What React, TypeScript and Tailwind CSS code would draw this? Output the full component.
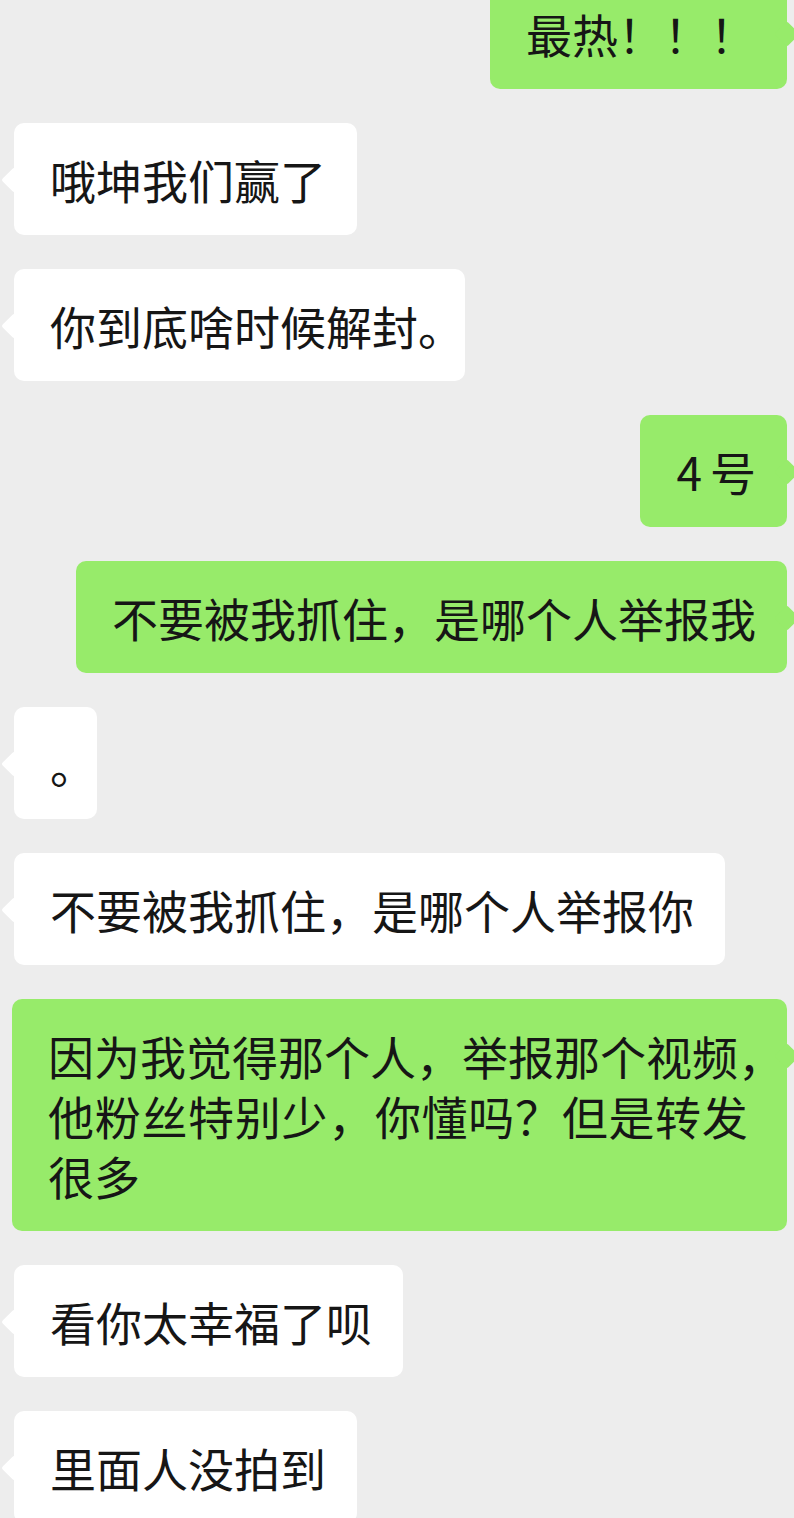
import React from "react";

type Msg = { side: "l" | "r"; lines: React.ReactNode[]; w?: string };

const Dot = () => <span className="inline-block w-[16px] overflow-visible whitespace-nowrap">。</span>;

const msgs: Msg[] = [
  { side: "r", lines: ["最热！！！"] },
  { side: "l", lines: ["哦坤我们赢了"] },
  { side: "l", lines: [<>你到底啥时候解封<Dot /></>] },
  { side: "r", lines: [<><span className="mr-[8px]">4</span>号</>] },
  { side: "r", lines: ["不要被我抓住，是哪个人举报我"] },
  { side: "l", lines: [<Dot />] },
  { side: "l", lines: ["不要被我抓住，是哪个人举报你"] },
  {
    side: "r",
    lines: [
      "因为我觉得那个人，举报那个视频，",
      <span className="tracking-[0.7px]">他粉丝特别少，你懂吗？但是转发</span>,
      "很多",
    ],
    w: "w-[775px]",
  },
  { side: "l", lines: ["看你太幸福了呗"] },
  { side: "l", lines: ["里面人没拍到"] },
];

function Bubble({ m }: { m: Msg }) {
  const green = m.side === "r";
  return (
    <div className={green ? "flex justify-end pr-[7px]" : "flex justify-start pl-[14px]"}>
      <div
        className={
          "relative rounded-[10px] pl-[36px] pr-[31px] py-[26px] text-[46px] leading-[60px] text-[#161616] whitespace-nowrap " +
          (green ? "bg-[#97eb6a] " : "bg-white ") +
          (m.w ?? "")
        }
      >
        <div
          className={
            "absolute top-[48px] w-[18px] h-[18px] rotate-45 rounded-[2px] " +
            (green ? "right-[-9px] bg-[#97eb6a]" : "left-[-9px] bg-white")
          }
        />
        <div className="relative">
          {m.lines.map((l, i) => (
            <div key={i}>{l}</div>
          ))}
        </div>
      </div>
    </div>
  );
}

export default function App() {
  return (
    <div
      className="w-[794px] h-[1518px] overflow-hidden bg-[#ededed]"
      style={{ fontFamily: '"Noto Sans CJK SC", "Noto Sans", sans-serif' }}
    >
      <div className="flex flex-col gap-[34px] mt-[-23px]">
        {msgs.map((m, i) => (
          <Bubble key={i} m={m} />
        ))}
      </div>
    </div>
  );
}
